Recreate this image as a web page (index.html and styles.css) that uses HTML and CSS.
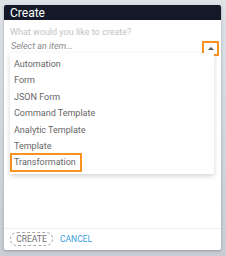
FILE: index.html
```html
<!DOCTYPE html>
<html>
<head>
<meta charset="utf-8">
<link rel="stylesheet" href="styles.css">
</head>
<body>
<div class="backdrop">
  <div class="dialog">
    <div class="header">Create</div>
    <div class="body">
      <div class="label">What would you like to create?</div>
      <div class="select-row">
        <div class="select-input">Select an item...</div>
        <div class="arrow-btn"><span class="tri"></span></div>
      </div>
      <ul class="menu">
        <li class="item">Automation</li>
        <li class="item">Form</li>
        <li class="item">JSON Form</li>
        <li class="item">Command Template</li>
        <li class="item">Analytic Template</li>
        <li class="item">Template</li>
        <li class="item marked">Transformation</li>
      </ul>
    </div>
    <div class="footer">
      <button class="btn-create">CREATE</button>
      <button class="btn-cancel">CANCEL</button>
    </div>
  </div>
</div>
</body>
</html>
```
FILE: styles.css
```css
html, body {
  margin: 0;
  padding: 0;
}
body {
  width: 226px;
  height: 256px;
  overflow: hidden;
  background: linear-gradient(180deg, #dde2e7 0px, #d3d8de 120px, #c8cdd3 256px);
  font-family: Roboto, "Liberation Sans", sans-serif;
}
.backdrop {
  padding: 5px 5px 0 4px;
}
.dialog {
  position: relative;
  width: 217px;
  height: 245px;
  background: #fff;
  border-radius: 2px;
  box-shadow: 0 1px 3px rgba(0,0,0,0.25);
  display: flex;
  flex-direction: column;
  overflow: hidden;
}
.header {
  height: 15px;
  background: #131929;
  color: #fff;
  font-size: 12px;
  line-height: 16px;
  padding-left: 6px;
  flex: none;
}
.body {
  flex: 1;
  padding: 7px 2px 0 6px;
}
.label {
  font-size: 9px;
  line-height: 11px;
  color: #c3c3c3;
}
.select-row {
  display: flex;
  align-items: flex-end;
  margin-top: 2px;
}
.select-input {
  flex: 1;
  height: 14px;
  font-size: 9px;
  line-height: 13px;
  font-style: italic;
  color: #888;
  border-bottom: 1px solid #7cc3ea;
  padding-left: 1px;
}
.arrow-btn {
  width: 17px;
  height: 15px;
  box-sizing: border-box;
  border: 2px solid #f7931e;
  display: flex;
  align-items: center;
  justify-content: center;
  margin-bottom: -1px;
}
.tri {
  width: 0;
  height: 0;
  border-left: 3px solid transparent;
  border-right: 3px solid transparent;
  border-bottom: 3px solid #555;
}
.menu {
  position: absolute;
  left: 6px;
  top: 48px;
  width: 204px;
  margin: 0;
  padding: 3px 0 3px;
  list-style: none;
  background: #fff;
  box-shadow: 0 2px 5px rgba(0,0,0,0.18);
}
.item {
  position: relative;
  height: 16.4px;
  line-height: 16.4px;
  font-size: 9px;
  color: #666;
  padding-left: 4px;
}
.marked::after {
  content: "";
  position: absolute;
  left: 0;
  top: -1px;
  width: 72px;
  height: 19px;
  box-sizing: border-box;
  border: 2px solid #f7931e;
}
.footer {
  flex: none;
  height: 20px;
  border-top: 1px solid #f0f0f0;
  display: flex;
  align-items: center;
  gap: 7px;
  padding: 0 6px 1px;
}
.btn-create {
  width: 43px;
  height: 14px;
  padding: 0;
  border: 1px dashed #aaa;
  border-radius: 7px;
  background: #fff;
  font-family: Roboto, "Liberation Sans", sans-serif;
  font-size: 8.5px;
  color: #6f6f6f;
  line-height: 12px;
}
.btn-cancel {
  padding: 0;
  border: none;
  background: none;
  font-family: Roboto, "Liberation Sans", sans-serif;
  font-size: 8.5px;
  color: #3aa0dd;
  line-height: 12px;
}
```
